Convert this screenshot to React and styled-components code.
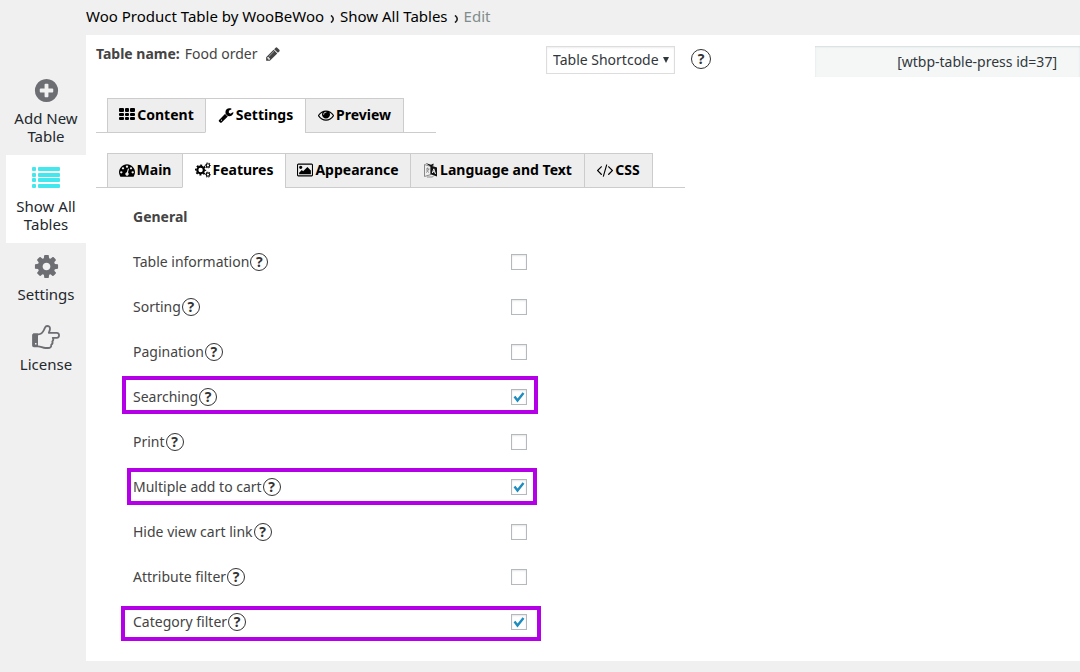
import React, { useState } from "react";
import styled, { createGlobalStyle } from "styled-components";

const GlobalStyle = createGlobalStyle`
  *, *::before, *::after { box-sizing: border-box; }
  body {
    margin: 0;
    background: #f0f0f0;
    color: #444;
    font-family: "Noto Sans", "Open Sans", sans-serif;
    font-size: 14px;
    line-height: 18px;
  }
  button, input, select { font: inherit; color: inherit; }
`;

const Page = styled.div`
  display: grid;
  grid-template-columns: 86px minmax(0, 1fr);
  grid-template-rows: 35px auto;
  padding-bottom: 11px;
`;

const Breadcrumbs = styled.nav`
  grid-column: 2;
  display: flex;
  align-items: center;
  gap: 5px;
  height: 32px;
  font-size: 15px;
  color: #000;
  a { color: inherit; text-decoration: none; }
`;

const Separator = styled.svg`
  width: 5px;
  height: 8px;
  margin: 6px 0 0 1px;
  fill: none;
  stroke: #222;
  stroke-width: 1.6;
`;

const Current = styled.span`
  color: #7f8c8d;
`;

const Sidebar = styled.nav`
  display: flex;
  flex-direction: column;
  padding: 32px 0 0 6px;
`;

const SideLink = styled.a`
  display: flex;
  flex-direction: column;
  align-items: center;
  gap: 5px;
  padding: 10px 4px;
  background: ${(p) => (p.$active ? "#fff" : "transparent")};
  color: #23282d;
  font-size: 15px;
  text-align: center;
  text-decoration: none;
`;

const SideIcon = styled.span`
  display: flex;
  align-items: center;
  justify-content: center;
  height: 27px;
  color: ${(p) => (p.$active ? "#42e8ee" : "#6d6e73")};
`;

const Panel = styled.main`
  background: #fff;
  padding: 11px 0 17px 10px;
`;

const TitleRow = styled.header`
  display: grid;
  grid-template-columns: 450px 145px 124px minmax(0, 1fr);
  align-items: start;
  height: 52px;
`;

const TableName = styled.div`
  display: flex;
  align-items: center;
  gap: 5px;
  height: 16px;
`;

const IconButton = styled.button`
  display: flex;
  margin: 0;
  padding: 0 2px;
  border: 0;
  background: none;
  cursor: pointer;
`;

const SelectWrap = styled.div`
  position: relative;
  width: 129px;
  color: #32373c;
`;

const ShortcodeSelect = styled.select`
  display: block;
  width: 100%;
  height: 28px;
  padding: 0 6px;
  border: 1px solid #ddd;
  border-radius: 0;
  background: #fff;
  box-shadow: inset 0 1px 2px rgba(0, 0, 0, 0.07);
  appearance: none;
`;

const Arrow = styled.svg`
  position: absolute;
  right: 6px;
  top: 11px;
  width: 6px;
  height: 6px;
  fill: currentColor;
  pointer-events: none;
`;

const HelpButton = styled.button`
  display: flex;
  align-items: center;
  justify-content: center;
  width: ${(p) => (p.$large ? 20 : 18)}px;
  height: ${(p) => (p.$large ? 20 : 18)}px;
  margin: ${(p) => (p.$large ? "3px 0 0" : "0")};
  padding: 0;
  border: 1px solid #333;
  border-radius: 50%;
  background: none;
  color: #333;
  font-weight: 700;
  cursor: help;
`;

const ShortcodeInput = styled.input`
  width: 100%;
  height: 31px;
  padding: 0 23px;
  border: 0;
  background: #f5f7f7;
  box-shadow: inset 0 1px 2px #d3dcdc;
  color: #32373c;
  text-align: right;
`;

const Tabs = styled.div`
  display: flex;
  width: max-content;
  height: 35px;
  margin-bottom: ${(p) => p.$gap}px;
  padding: 0 32px 0 11px;
  box-shadow: inset 0 -1px 0 #ccc;
`;

const Tab = styled.button`
  display: flex;
  align-items: center;
  justify-content: center;
  gap: 2px;
  width: ${(p) => p.$width}px;
  margin: 0;
  padding: 0 0 2px;
  border: solid #ccc;
  border-width: 1px 0 1px 1px;
  border-bottom-color: ${(p) => (p.$active ? "#fff" : "#ccc")};
  background: ${(p) => (p.$active ? "#fff" : "#eee")};
  color: #000;
  font-weight: 700;
  white-space: nowrap;
  cursor: pointer;
  &:last-child { border-right-width: 1px; }
`;

const Options = styled.section`
  width: 394px;
  margin-left: 37px;
`;

const Heading = styled.h2`
  display: flex;
  align-items: center;
  height: 45px;
  margin: 0;
  font-size: 14px;
`;

const Row = styled.div`
  position: relative;
  display: flex;
  align-items: center;
  gap: 1px;
  height: 45px;
`;

const Highlight = styled.span`
  position: absolute;
  inset: ${(p) => p.$inset};
  border: 4px solid #b400e6;
  pointer-events: none;
`;

const CheckBox = styled.span`
  display: grid;
  place-items: center;
  margin-left: auto;
  svg {
    grid-area: 1 / 1;
    width: 12px;
    height: 12px;
    fill: none;
    stroke: #1e8cbe;
    stroke-width: 2.4;
    pointer-events: none;
  }
`;

const Check = styled.input`
  appearance: none;
  grid-area: 1 / 1;
  width: 16px;
  height: 16px;
  margin: 0;
  border: 1px solid #b4b9be;
  background: #fff;
  box-shadow: inset 0 1px 2px rgba(0, 0, 0, 0.1);
`;

const shapes = {
  plus: "M1344 960v-128q0-26-19-45t-45-19h-256v-256q0-26-19-45t-45-19h-128q-26 0-45 19t-19 45v256h-256q-26 0-45 19t-19 45v128q0 26 19 45t45 19h256v256q0 26 19 45t45 19h128q26 0 45-19t19-45v-256h256q26 0 45-19t19-45zm320-64q0 209-103 385.5t-279.5 279.5-385.5 103-385.5-103-279.5-279.5-103-385.5 103-385.5 279.5-279.5 385.5-103 385.5 103 279.5 279.5 103 385.5z",
  wrench: "M448 1472q0-26-19-45t-45-19-45 19-19 45 19 45 45 19 45-19 19-45zm644-420l-682 682q-37 37-90 37-52 0-91-37l-106-108q-38-36-38-90 0-53 38-91l681-681q39 98 114.5 173.5t173.5 114.5zm634-435q0 39-23 106-47 134-164.5 217.5t-258.5 83.5q-185 0-316.5-131.5t-131.5-316.5 131.5-316.5 316.5-131.5q58 0 121.5 16.5t107.5 46.5q16 11 16 28t-16 28l-293 169v224l193 107q5-3 79-48.5t135.5-81 70.5-35.5q15 0 23.5 10t8.5 25z",
  eye: "M1664 960q-152-236-381-353 61 104 61 225 0 185-131.5 316.5t-316.5 131.5-316.5-131.5-131.5-316.5q0-121 61-225-229 117-381 353 133 205 333.5 326.5t434.5 121.5 434.5-121.5 333.5-326.5zm-720-384q0-20-14-34t-34-14q-125 0-214.5 89.5t-89.5 214.5q0 20 14 34t34 14 34-14 14-34q0-86 61-147t147-61q20 0 34-14t14-34zm848 384q0 34-20 69-140 230-376.5 368.5t-499.5 138.5-499.5-139-376.5-368q-20-35-20-69t20-69q140-229 376.5-368t499.5-139 499.5 139 376.5 368q20 35 20 69z",
  gauge: "M384 1152q0-53-37.5-90.5t-90.5-37.5-90.5 37.5-37.5 90.5 37.5 90.5 90.5 37.5 90.5-37.5 37.5-90.5zm192-448q0-53-37.5-90.5t-90.5-37.5-90.5 37.5-37.5 90.5 37.5 90.5 90.5 37.5 90.5-37.5 37.5-90.5zm428 481l101-382q6-26-7.5-48.5t-38.5-29.5-48 6.5-30 39.5l-101 382q-60 5-107 43.5t-63 98.5q-20 77 20 146t117 89 146-20 89-117q16-60-6-117t-72-91zm660-33q0-53-37.5-90.5t-90.5-37.5-90.5 37.5-37.5 90.5 37.5 90.5 90.5 37.5 90.5-37.5 37.5-90.5zm-640-640q0-53-37.5-90.5t-90.5-37.5-90.5 37.5-37.5 90.5 37.5 90.5 90.5 37.5 90.5-37.5 37.5-90.5zm448 192q0-53-37.5-90.5t-90.5-37.5-90.5 37.5-37.5 90.5 37.5 90.5 90.5 37.5 90.5-37.5 37.5-90.5zm320 448q0 261-141 483-19 29-54 29h-1402q-35 0-54-29-141-221-141-483 0-182 71-348t191-286 286-191 348-71 348 71 286 191 191 286 71 348z",
  picture: "M576 576q0 80-56 136t-136 56-136-56-56-136 56-136 136-56 136 56 56 136zm1024 384v448h-1408v-192l320-320 160 160 512-512zm96-704h-1600q-13 0-22.5 9.5t-9.5 22.5v1216q0 13 9.5 22.5t22.5 9.5h1600q13 0 22.5-9.5t9.5-22.5v-1216q0-13-9.5-22.5t-22.5-9.5zm160 32v1216q0 66-47 113t-113 47h-1600q-66 0-113-47t-47-113v-1216q0-66 47-113t113-47h1600q66 0 113 47t47 113z",
  code: "M553 1399l-50 50q-10 10-23 10t-23-10l-466-466q-10-10-10-23t10-23l466-466q10-10 23-10t23 10l50 50q10 10 10 23t-10 23l-393 393 393 393q10 10 10 23t-10 23zm591-1067l-373 1291q-4 13-15.5 19.5t-23.5 2.5l-62-17q-13-4-19.5-15.5t-2.5-24.5l373-1291q4-13 15.5-19.5t23.5-2.5l62 17q13 4 19.5 15.5t2.5 24.5zm657 651l-466 466q-10 10-23 10t-23-10l-50-50q-10-10-10-23t10-23l393-393-393-393q-10-10-10-23t10-23l50-50q10-10 23-10t23 10l466 466q10 10 10 23t-10 23z",
  cog: "M1152 896q0-106-75-181t-181-75-181 75-75 181 75 181 181 75 181-75 75-181zm512-109v222q0 12-8 23t-20 13l-185 28q-19 54-39 91 35 50 107 138 10 12 10 25t-9 23q-27 37-99 108t-94 71q-12 0-26-9l-138-108q-44 23-91 38-16 136-29 186-7 28-36 28h-222q-14 0-24.5-8.5t-11.5-21.5l-28-184q-49-16-90-37l-141 107q-10 9-25 9-14 0-25-11-126-114-165-168-7-10-7-23 0-12 8-23 15-21 51-66.5t54-70.5q-27-50-41-99l-183-27q-13-2-21-12.5t-8-23.5v-222q0-12 8-23t19-13l186-28q14-46 39-92-40-57-107-138-10-12-10-24 0-10 9-23 26-36 98.5-107.5t94.5-71.5q13 0 26 10l138 107q44-23 91-38 16-136 29-186 7-28 36-28h222q14 0 24.5 8.5t11.5 21.5l28 184q49 16 90 37l142-107q9-9 24-9 13 0 25 10 129 119 165 170 7 8 7 22 0 12-8 23-15 21-51 66.5t-54 70.5q26 50 41 98l183 28q13 2 21 12.5t8 23.5z",
  pencil: "M491 1536l91-91-235-235-91 91v107h128v128h107zm523-928q0-22-22-22-10 0-17 7l-542 542q-7 7-7 17 0 22 22 22 10 0 17-7l542-542q7-7 7-17zm-54-192l416 416-832 832h-416v-416zm683 96q0 53-37 90l-166 166-416-416 166-165q36-38 90-38 53 0 91 38l235 234q37 39 37 91z",
};

const Glyph = ({ name, size = 16 }) => (
  <svg width={size} height={size} viewBox={name === "picture" ? "-64 0 1920 1792" : "0 0 1792 1792"} fill="currentColor" aria-hidden="true">
    <path d={shapes[name]} />
  </svg>
);

const ListGlyph = () => (
  <svg width="28" height="24" viewBox="0 0 28 24" fill="currentColor" aria-hidden="true">
    {[0, 6, 11, 17].map((y) => (
      <g key={y}>
        <rect x="0" y={y} width="4" height="4" rx="1" />
        <rect x="6" y={y} width="22" height="4" rx="1" />
      </g>
    ))}
  </svg>
);

const GridGlyph = () => (
  <svg width="16" height="13" viewBox="0 0 16 13" fill="currentColor" aria-hidden="true">
    {[0, 5, 9].map((y) => [0, 6, 11].map((x) => (
      <rect key={`${x}-${y}`} x={x} y={y} width={x === 6 ? 4 : 5} height={y === 0 ? 4 : 3} rx="1" />
    )))}
  </svg>
);

const GearsGlyph = () => (
  <svg width="16" height="16" viewBox="0 0 16 16" fill="none" stroke="currentColor" aria-hidden="true">
    <circle cx="5.6" cy="8" r="3.3" strokeWidth="2.2" />
    <circle cx="5.6" cy="8" r="4.8" strokeWidth="1.6" strokeDasharray="1.9 1.87" strokeDashoffset=".95" />
    {[3.4, 12.6].map((y) => (
      <g key={y}>
        <circle cx="12.9" cy={y} r="1.7" strokeWidth="1.1" />
        <circle cx="12.9" cy={y} r="2.6" strokeWidth="1" strokeDasharray="1.3 1.42" strokeDashoffset=".65" />
      </g>
    ))}
  </svg>
);

const HandGlyph = () => (
  <svg width="28" height="24" viewBox="0 0 28 24" fill="none" stroke="currentColor" strokeWidth="1.8" strokeLinejoin="round" aria-hidden="true">
    <path d="M1 8.500H6V21.500H1zM3 18v1.500H4.500V18z" fill="currentColor" stroke="none" fillRule="evenodd" />
    <path d="M5 9.300H1.900Q1 9.300 1 10.200V20.500Q1 21.300 1.900 21.300H6C9 21.300 10.500 23 13.500 23H16C18.500 23 19.500 21.700 19.200 19.800C20.500 19 20.800 17.700 20.300 16.500C21.500 15.400 21.500 14 20.800 12.800H24.800C27.800 12.800 27.800 7.800 24.800 7.800H16.800C17.300 6.300 18 5.300 18 3.700C18 1.700 16.800 1 15 1C13 1 12.800 3.300 12 4.900C11 7 8.500 9.300 6.500 9.300H5" />
  </svg>
);

const TranslateGlyph = () => (
  <svg width="15" height="16" viewBox="0 0 15 16" fill="none" aria-hidden="true">
    <path d="M1.5 2.5L8 4.5V12.5L1.5 14.5Z" stroke="#888" />
    <path d="M3 7H6.5M4.6 5.5V7M5.6 7Q5 9.2 3 10.6M3.4 8.2L6 10.6M4 15H9L10.5 14.4" stroke="#777" strokeWidth=".8" />
    <path d="M2.5 1L8 2.8L10.5 1.6V3.6L7.5 4.6Z" fill="#111" />
    <path d="M7.5 3.5L14 5.5V14.5L7.5 12.3Z" fill="#111" />
    <path d="M9.3 11L10.8 6.8L12.5 12M9.9 9.5L11.9 10.1" stroke="#eee" />
  </svg>
);

const HelpMark = ({ about, large }) => (
  <HelpButton type="button" $large={large} aria-label={`Help: ${about}`}>?</HelpButton>
);

const Chevron = () => (
  <Separator viewBox="0 0 5 8" aria-hidden="true"><path d="M1 .4Q5.500 4 1 7.600" /></Separator>
);

const sideItems = [
  { label: "Add New Table", icon: <Glyph name="plus" size={27} /> },
  { label: "Show All Tables", icon: <ListGlyph />, active: true },
  { label: "Settings", icon: <Glyph name="cog" size={27} /> },
  { label: "License", icon: <HandGlyph /> },
];

const mainTabs = [
  { label: "Content", icon: <GridGlyph />, width: 98 },
  { label: "Settings", icon: <Glyph name="wrench" />, width: 100 },
  { label: "Preview", icon: <Glyph name="eye" />, width: 99 },
];

const settingTabs = [
  { label: "Main", icon: <Glyph name="gauge" />, width: 75 },
  { label: "Features", icon: <GearsGlyph />, width: 103 },
  { label: "Appearance", icon: <Glyph name="picture" />, width: 125 },
  { label: "Language and Text", icon: <TranslateGlyph />, width: 174 },
  { label: "CSS", icon: <Glyph name="code" />, width: 69 },
];

const options = [
  { label: "Table information" },
  { label: "Sorting" },
  { label: "Pagination" },
  { label: "Searching", on: true, inset: "2px -11px 5px" },
  { label: "Print" },
  { label: "Multiple add to cart", on: true, inset: "4px -10px 4px -6px" },
  { label: "Hide view cart link" },
  { label: "Attribute filter" },
  { label: "Category filter", on: true, inset: "7px -14px 3px -12px" },
];

function TabBar({ items, initial, gap, name }) {
  const [active, setActive] = useState(initial);
  return (
    <Tabs role="tablist" aria-label={name} $gap={gap}>
      {items.map((t) => (
        <Tab
          key={t.label}
          type="button"
          role="tab"
          aria-selected={active === t.label}
          $active={active === t.label}
          $width={t.width}
          onClick={() => setActive(t.label)}
        >
          {t.icon}
          <span>{t.label}</span>
        </Tab>
      ))}
    </Tabs>
  );
}

function Option({ label, on, inset }) {
  const [checked, setChecked] = useState(Boolean(on));
  const id = label.toLowerCase().replaceAll(" ", "-");
  return (
    <Row>
      <label htmlFor={id}>{label}</label>
      <HelpMark about={label} />
      <CheckBox>
        <Check id={id} type="checkbox" checked={checked} onChange={(e) => setChecked(e.target.checked)} />
        {checked && <svg viewBox="0 0 12 12" aria-hidden="true"><path d="M1.500 5.500L4.500 9.500 10.500 2" /></svg>}
      </CheckBox>
      {inset && <Highlight $inset={inset} />}
    </Row>
  );
}

export default function App() {
  return (
    <>
      <GlobalStyle />
      <Page>
        <Breadcrumbs aria-label="Breadcrumb">
          <a href="#home">Woo Product Table by WooBeWoo</a>
          <Chevron />
          <a href="#tables">Show All Tables</a>
          <Chevron />
          <Current>Edit</Current>
        </Breadcrumbs>
        <Sidebar aria-label="Sections">
          {sideItems.map((s) => (
            <SideLink key={s.label} href="#section" $active={s.active}>
              <SideIcon $active={s.active}>{s.icon}</SideIcon>
              {s.label}
            </SideLink>
          ))}
        </Sidebar>
        <Panel>
          <TitleRow>
            <TableName>
              <strong>Table name:</strong>
              <span>Food order</span>
              <IconButton type="button" aria-label="Rename table"><Glyph name="pencil" /></IconButton>
            </TableName>
            <SelectWrap>
              <ShortcodeSelect aria-label="Shortcode type">
                <option>Table Shortcode</option>
              </ShortcodeSelect>
              <Arrow viewBox="0 0 6 6" aria-hidden="true"><path d="M0 0h6L3 6z" /></Arrow>
            </SelectWrap>
            <HelpMark about="Shortcode" large />
            <ShortcodeInput aria-label="Shortcode" readOnly value="[wtbp-table-press id=37]" />
          </TitleRow>
          <TabBar name="Table" items={mainTabs} initial="Settings" gap={20} />
          <TabBar name="Settings" items={settingTabs} initial="Features" gap={6} />
          <Options>
            <Heading>General</Heading>
            {options.map((o) => <Option key={o.label} {...o} />)}
          </Options>
        </Panel>
      </Page>
    </>
  );
}
